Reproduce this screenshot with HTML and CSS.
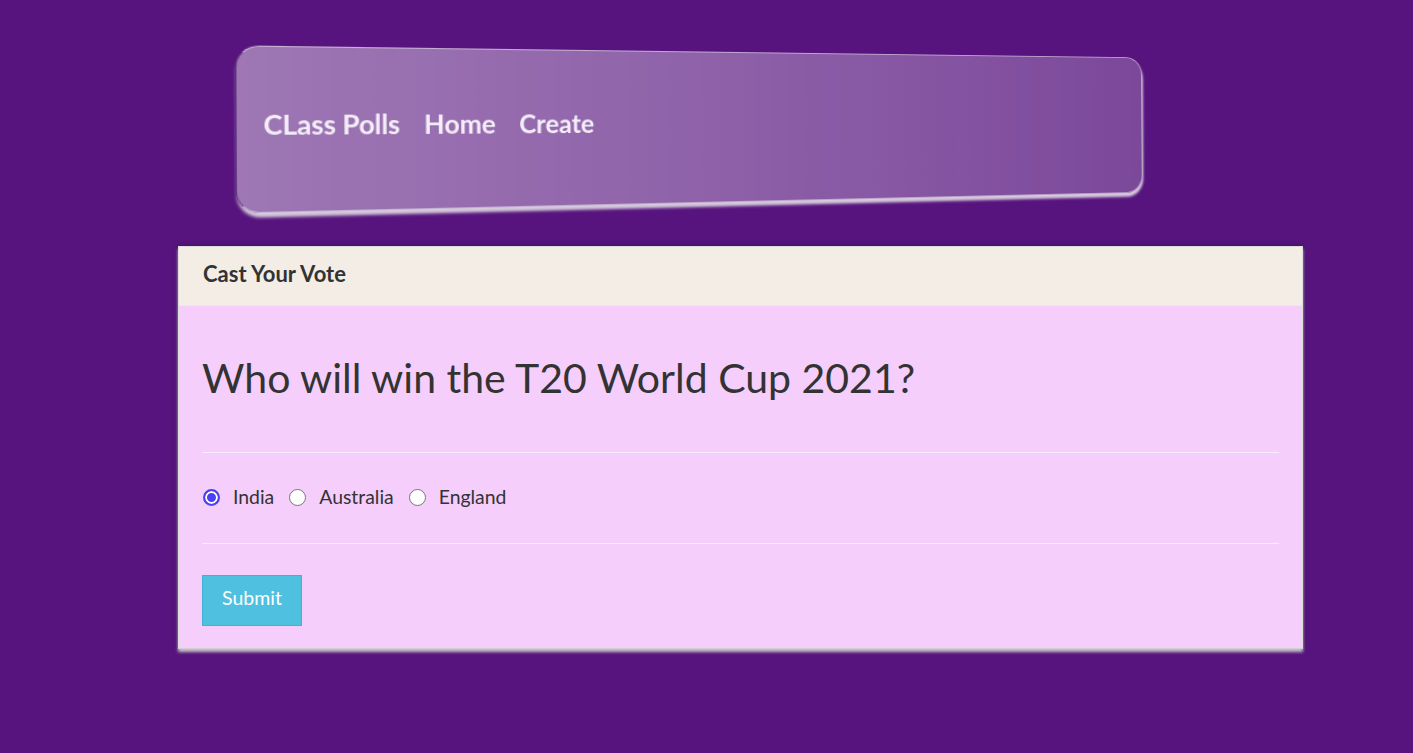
FILE: index.html
```html
<!DOCTYPE html>
<html lang="en">
<head>
<meta charset="utf-8">
<title>CLass Polls</title>
<link rel="stylesheet" href="styles.css">
</head>
<body>
  <nav class="glass-nav">
    <a class="brand" href="#">CLass Polls</a>
    <a class="nav-link" href="#">Home</a>
    <a class="nav-link" href="#">Create</a>
  </nav>
  <section class="card">
    <header class="card-header">Cast Your Vote</header>
    <div class="card-body">
      <h1 class="question">Who will win the T20 World Cup 2021?</h1>
      <hr class="rule">
      <form class="vote-form">
        <div class="options">
          <label class="option"><input type="radio" name="team" checked><span>India</span></label>
          <label class="option"><input type="radio" name="team"><span>Australia</span></label>
          <label class="option"><input type="radio" name="team"><span>England</span></label>
        </div>
        <hr class="rule rule-second">
        <button type="button" class="btn-submit">Submit</button>
      </form>
    </div>
  </section>
</body>
</html>
```

FILE: styles.css
```css
* { box-sizing: border-box; }

html, body {
  margin: 0;
  padding: 0;
}

body {
  background: #57147e;
  font-family: Lato, "Open Sans", "Liberation Sans", sans-serif;
  color: #333;
  min-height: 753px;
  padding-top: 52px;
  display: flex;
  flex-direction: column;
  align-items: flex-start;
}

.glass-nav {
  margin-left: 277px;
  width: 922px;
  height: 150px;
  display: flex;
  align-items: center;
  gap: 21.5px;
  padding-left: 22px;
  padding-bottom: 10px;
  border-radius: 20px;
  background: linear-gradient(90deg, rgba(255,255,255,0.42), rgba(255,255,255,0.22));
  border: 1px solid rgba(255,255,255,0.45);
  border-left-color: rgba(60,20,90,0.45);
  box-shadow: 1px 4px 3px rgba(235,235,235,0.85);
  transform: perspective(1000px) rotateZ(-0.28deg) rotateY(13.6deg);
}

.glass-nav a {
  color: #f4eef8;
  text-decoration: none;
  font-weight: 700;
  font-size: 24px;
}

.glass-nav .brand {
  letter-spacing: -0.15px;
}

.card {
  margin-top: 44px;
  margin-left: 178px;
  width: 1125px;
  border: 1px solid #dcdcdc;
  border-bottom-color: #d0d0d0;
  background: #f5cefc;
  box-shadow: 0 3px 3px rgba(215,215,215,0.9), 0 0 6px rgba(0,0,0,0.35);
}

.card-header {
  height: 59px;
  background: #f3ede6;
  padding: 0 24px 5px;
  display: flex;
  align-items: center;
  font-weight: 700;
  font-size: 22px;
  border-bottom: 1px solid #efe9e0;
}

.card-body {
  padding: 24px 23px 22px;
}

.question {
  margin: 24px 0 0;
  font-size: 41px;
  font-weight: 400;
  line-height: 48px;
  color: #333;
}

.rule {
  border: 0;
  border-top: 1px solid rgba(255,255,255,0.6);
  margin: 50px 0 0;
}

.options {
  display: flex;
  align-items: center;
  margin-top: 30px;
  height: 27px;
  font-size: 19.4px;
}

.option {
  display: flex;
  align-items: center;
  margin-right: 14px;
}

.option input {
  appearance: none;
  -webkit-appearance: none;
  width: 17px;
  height: 17px;
  margin: 1px 13px 0 1px;
  border-radius: 50%;
  border: 1px solid #767676;
  background: #fff;
}

.option input:checked {
  border: 2px solid #4b3ff8;
  box-shadow: inset 0 0 0 2px #fff;
  background: #4b3ff8;
}

.rule-second {
  margin-top: 33px;
}

.btn-submit {
  margin-top: 31px;
  font-family: inherit;
  font-size: 19.5px;
  color: #fff;
  background: #4fc0e0;
  border: 1px solid #3fb3d6;
  padding: 0 19px 7px;
  height: 51px;
  display: flex;
  align-items: center;
}
```
